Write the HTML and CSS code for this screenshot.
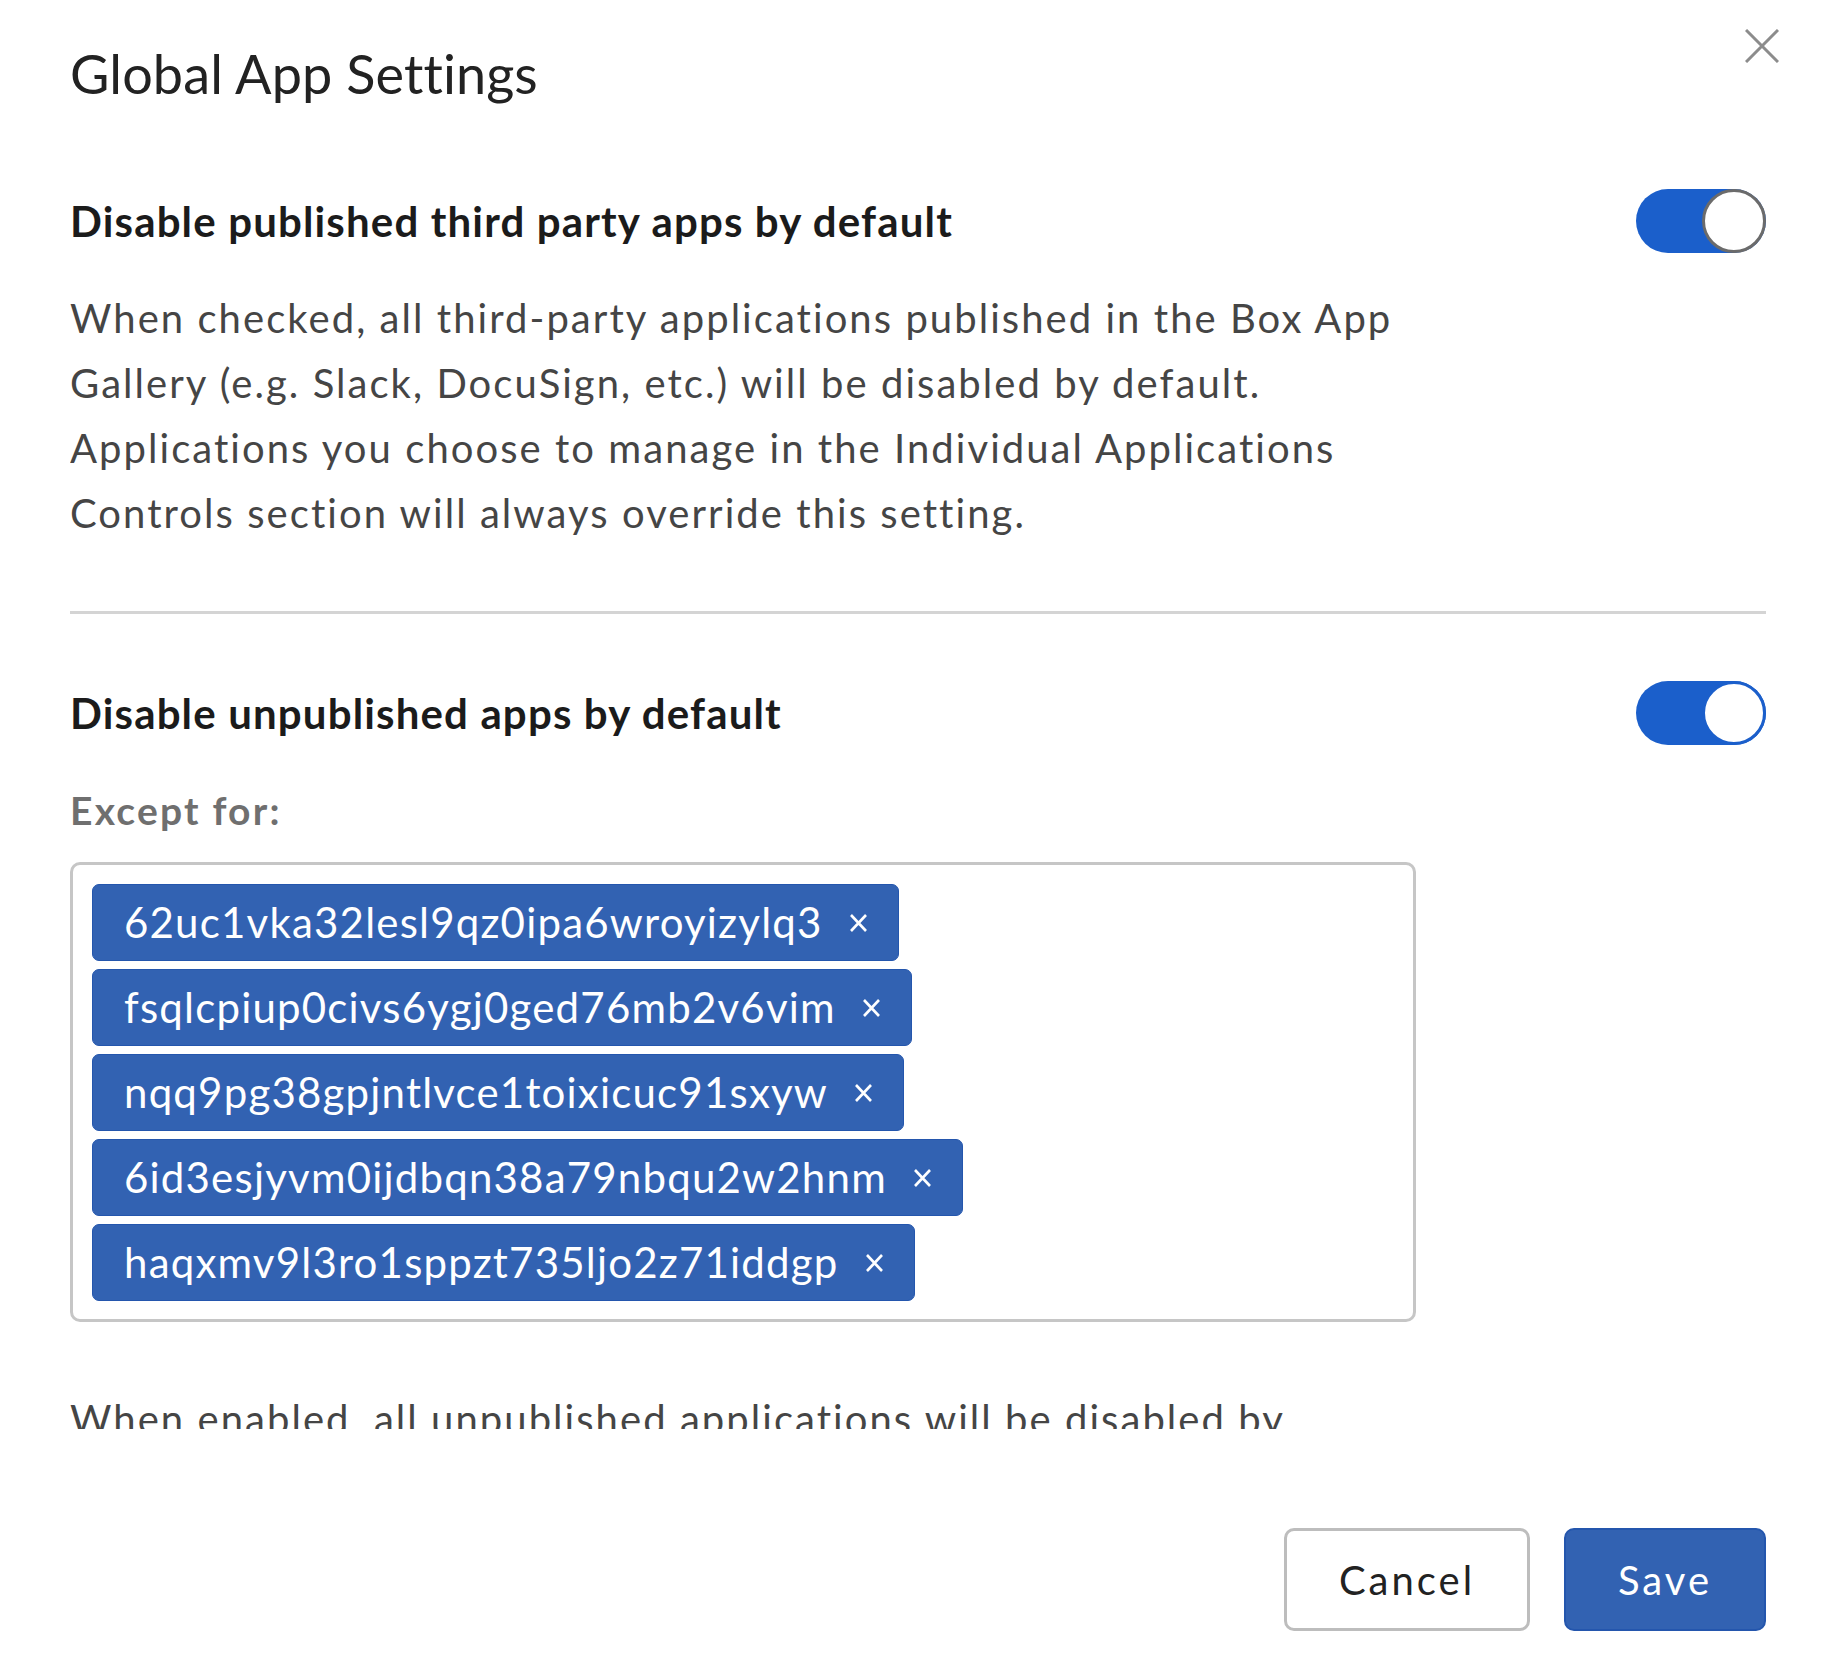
FILE: index.html
```html
<!DOCTYPE html>
<html lang="en">
<head>
<meta charset="utf-8">
<title>Global App Settings</title>
<link rel="stylesheet" href="styles.css">
</head>
<body>
<div class="modal">
  <header class="modal-header">
    <h1 class="modal-title">Global App Settings</h1>
    <button class="close-btn" aria-label="Close">
      <svg width="34" height="34" viewBox="0 0 34 34"><path d="M1 1 L33 33 M33 1 L1 33" stroke="#8c8c8c" stroke-width="3" fill="none"/></svg>
    </button>
  </header>
  <div class="modal-body">
    <section class="setting">
      <div class="setting-row">
        <h2 class="setting-title">Disable published third party apps by default</h2>
        <span class="toggle"><span class="knob"></span></span>
      </div>
      <p class="setting-desc">When checked, all third-party applications published in the Box App Gallery (e.g. Slack, DocuSign, etc.) will be disabled by default. Applications you choose to manage in the Individual Applications Controls section will always override this setting.</p>
    </section>
    <hr class="divider">
    <section class="setting">
      <div class="setting-row">
        <h2 class="setting-title">Disable unpublished apps by default</h2>
        <span class="toggle toggle-focus"><span class="knob"></span></span>
      </div>
      <div class="except-label">Except for:</div>
      <div class="pill-box">
        <span class="pill"><span class="pill-text">62uc1vka32lesl9qz0ipa6wroyizylq3</span><svg class="pill-x" width="19" height="18" viewBox="0 0 19 18"><path d="M2 1 L17 17 M17 1 L2 17" stroke="#fff" stroke-width="2.6" fill="none"/></svg></span>
        <span class="pill"><span class="pill-text">fsqlcpiup0civs6ygj0ged76mb2v6vim</span><svg class="pill-x" width="19" height="18" viewBox="0 0 19 18"><path d="M2 1 L17 17 M17 1 L2 17" stroke="#fff" stroke-width="2.6" fill="none"/></svg></span>
        <span class="pill"><span class="pill-text">nqq9pg38gpjntlvce1toixicuc91sxyw</span><svg class="pill-x" width="19" height="18" viewBox="0 0 19 18"><path d="M2 1 L17 17 M17 1 L2 17" stroke="#fff" stroke-width="2.6" fill="none"/></svg></span>
        <span class="pill"><span class="pill-text">6id3esjyvm0ijdbqn38a79nbqu2w2hnm</span><svg class="pill-x" width="19" height="18" viewBox="0 0 19 18"><path d="M2 1 L17 17 M17 1 L2 17" stroke="#fff" stroke-width="2.6" fill="none"/></svg></span>
        <span class="pill"><span class="pill-text">haqxmv9l3ro1sppzt735ljo2z71iddgp</span><svg class="pill-x" width="19" height="18" viewBox="0 0 19 18"><path d="M2 1 L17 17 M17 1 L2 17" stroke="#fff" stroke-width="2.6" fill="none"/></svg></span>
      </div>
      <p class="setting-desc after-box">When enabled, all unpublished applications will be disabled by default. Applications you choose to manage in the Individual Applications Controls section will always override this setting.</p>
    </section>
  </div>
  <footer class="modal-footer">
    <button class="btn btn-secondary">Cancel</button>
    <button class="btn btn-primary">Save</button>
  </footer>
</div>
</body>
</html>
```

FILE: styles.css
```css
* { box-sizing: border-box; }

html, body {
  margin: 0;
  padding: 0;
  background: #fff;
}

body {
  font-family: Lato, "Open Sans", "Liberation Sans", sans-serif;
  color: #222;
}

.modal {
  height: 100vh;
  display: flex;
  flex-direction: column;
  padding: 0 72px 0 70px;
}

.modal-header {
  display: flex;
  justify-content: space-between;
  align-items: flex-start;
  padding-top: 29px;
  flex: none;
}

.modal-title {
  margin: 13px 0 0 0;
  font-size: 54px;
  line-height: 64px;
  font-weight: 400;
  color: #222;
  letter-spacing: 0.1px;
}

.close-btn {
  border: 0;
  background: none;
  padding: 0;
  margin-right: -13px;
  width: 34px;
  height: 34px;
  display: flex;
}

.modal-body {
  flex: 1;
  min-height: 0;
  overflow: hidden;
  padding-top: 83px;
}

.setting-row {
  display: flex;
  justify-content: space-between;
  align-items: center;
  height: 64px;
}

.setting-title {
  margin: 0;
  font-size: 42px;
  line-height: 64px;
  font-weight: 700;
  color: #1b1b1b;
  letter-spacing: 1.15px;
}

.toggle {
  width: 130px;
  height: 64px;
  border-radius: 32px;
  background: #1b5fcb;
  display: flex;
  justify-content: flex-end;
  flex: none;
}

.knob {
  width: 64px;
  height: 64px;
  border-radius: 50%;
  background: #fff;
  border: 3px solid #6b6b6b;
}

.toggle-focus .knob {
  border-color: #1b5fcb;
}

.setting-desc {
  margin: 33px 0 0 0;
  max-width: 1346px;
  font-size: 40px;
  line-height: 65px;
  color: #454545;
  letter-spacing: 2.05px;
}

.divider {
  border: 0;
  height: 3px;
  background: #d4d4d4;
  margin: 65px 0 67px 0;
}

.except-label {
  margin-top: 33px;
  font-size: 39px;
  line-height: 65px;
  font-weight: 700;
  color: #6f6f6f;
  letter-spacing: 2.2px;
}

.pill-box {
  margin-top: 19px;
  width: 1346px;
  border: 3px solid #c6c6c6;
  border-radius: 10px;
  padding: 19px 19px 18px 19px;
  display: flex;
  flex-wrap: wrap;
  align-items: flex-start;
  gap: 8px;
}

.pill {
  height: 77px;
  display: inline-flex;
  align-items: center;
  background: #3262b2;
  border: 1px solid #2456ad;
  border-radius: 7px;
  padding: 0 30px 0 31px;
  color: #fff;
}

.pill-text {
  font-size: 42px;
  line-height: 75px;
  letter-spacing: 1.2px;
}

.pill-x {
  margin-left: 26px;
  flex: none;
}

.after-box {
  margin-top: 65px;
}

.modal-footer {
  flex: none;
  height: 242px;
  display: flex;
  justify-content: flex-end;
  align-items: flex-start;
  gap: 34px;
  padding-top: 99px;
}

.btn {
  height: 103px;
  border-radius: 10px;
  font-family: Lato, "Open Sans", "Liberation Sans", sans-serif;
  font-size: 40px;
  letter-spacing: 3px;
  padding: 0;
  cursor: pointer;
}

.btn-secondary {
  width: 246px;
  background: #fff;
  border: 3px solid #bdbdbd;
  color: #222;
}

.btn-primary {
  width: 202px;
  background: #3262b2;
  border: 2px solid #2456ad;
  color: #fff;
}
```
